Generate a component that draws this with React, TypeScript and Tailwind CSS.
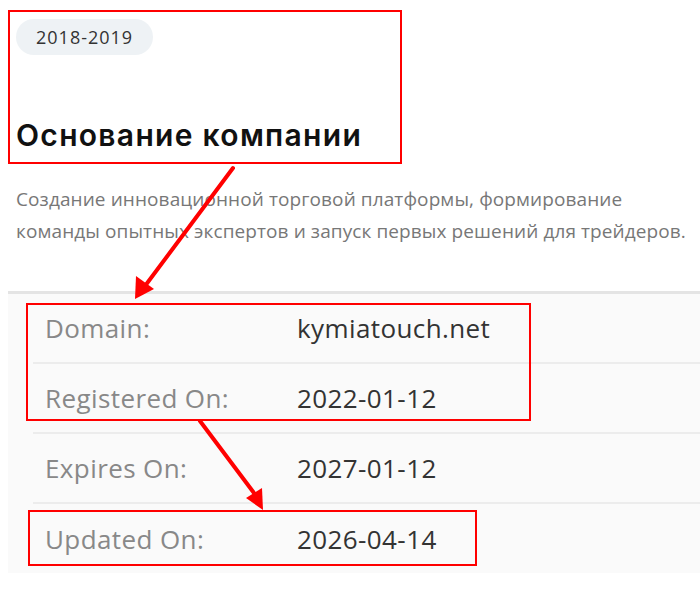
const rows = [
  { label: 'Domain:', value: 'kymiatouch.net' },
  { label: 'Registered On:', value: '2022-01-12' },
  { label: 'Expires On:', value: '2027-01-12' },
  { label: 'Updated On:', value: '2026-04-14' },
];

function Annotations() {
  return (
    <svg className="absolute inset-0 pointer-events-none" width="700" height="589" viewBox="0 0 700 589">
      <g fill="none" stroke="#ff0000" strokeWidth="2">
        <rect x="9" y="11" width="392" height="152" />
        <rect x="27" y="304" width="503" height="116" />
        <rect x="29" y="511" width="447" height="54" />
      </g>
      <g stroke="#ff0000" strokeWidth="4" strokeLinecap="round">
        <line x1="233" y1="168" x2="145" y2="286" />
        <line x1="200" y1="421" x2="257" y2="497" />
      </g>
      <g fill="#ff0000">
        <polygon points="135,299 136,276 154,289" />
        <polygon points="263,510 246,498 262,488" />
      </g>
    </svg>
  );
}

export default function App() {
  return (
    <div className="relative w-[700px] h-[589px] bg-white overflow-hidden" style={{ fontFamily: '"Open Sans", "Noto Sans", sans-serif' }}>
      <div className="pl-4 pt-[19px]">
        <span className="inline-flex items-center h-9 px-5 rounded-full bg-[#eef2f5] text-[18px] tracking-[1px] text-[#333]">2018-2019</span>
        <h2 className="mt-[60px] text-[30px] leading-[40px] font-semibold text-[#111] tracking-[1.3px]" style={{ fontFamily: 'Inter, "Noto Sans", sans-serif' }}>
          Основание компании
        </h2>
        <p className="mt-[28px] w-[684px] text-[19px] leading-[32px] tracking-[0.1px] text-[#777]">
          Создание инновационной торговой платформы, формирование команды опытных экспертов и запуск первых решений для трейдеров.
        </p>
      </div>

      <div className="ml-2 mt-[44px] border-t-[3px] border-[#e4e4e4] bg-[#fafafa] pl-[25px] h-[282px]">
        {rows.map((r, i) => (
          <div key={r.label} className={`flex items-center h-[70px] pl-3 ${i < rows.length - 1 ? 'border-b-2 border-[#ececec]' : ''}`}>
            <span className="w-[252px] text-[26px] tracking-[0.4px] text-[#888]">{r.label}</span>
            <span className="text-[26px] tracking-[0.4px] text-[#333]">{r.value}</span>
          </div>
        ))}
      </div>

      <Annotations />
    </div>
  );
}
